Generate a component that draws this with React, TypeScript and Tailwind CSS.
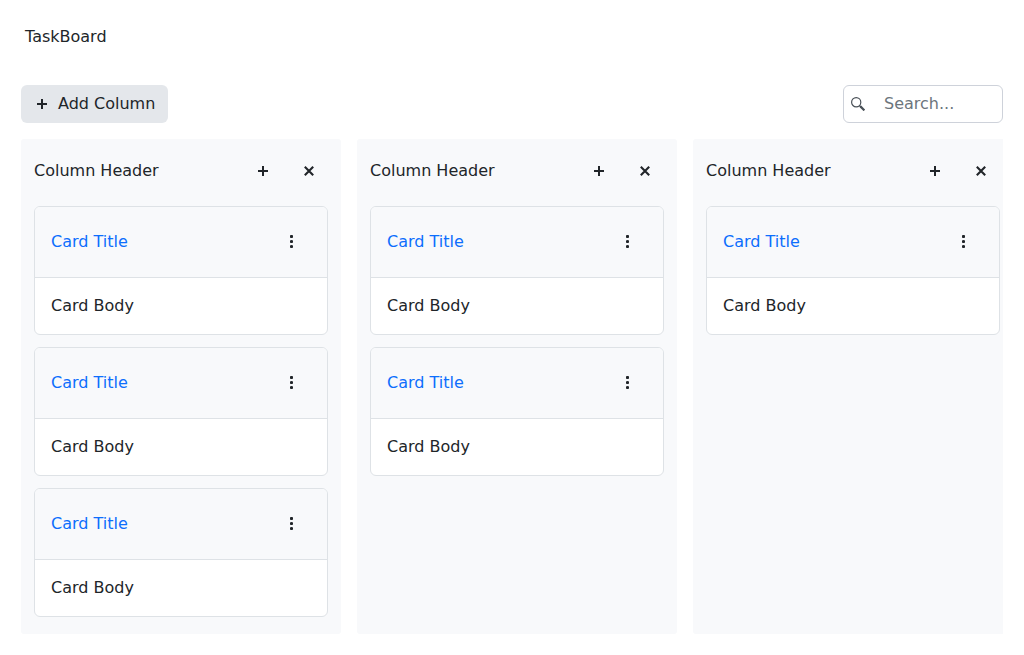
const columns = [3, 2, 1];

function PlusIcon() {
  return (
    <svg width="10" height="10" viewBox="0 0 10 10" className="block shrink-0" fill="currentColor">
      <path d="M4 0h2v4h4v2H6v4H4V6H0V4h4z" />
    </svg>
  );
}

function CloseIcon() {
  return (
    <svg width="10" height="10" viewBox="0 0 10 10" className="block shrink-0" fill="none" stroke="currentColor" strokeWidth="2.1">
      <path d="M0.8 0.8l8.4 8.4M9.2 0.8L0.8 9.2" />
    </svg>
  );
}

function MoreIcon() {
  return (
    <svg width="3" height="13" viewBox="0 0 3 13" className="block shrink-0" fill="currentColor">
      <circle cx="1.5" cy="1.5" r="1.6" />
      <circle cx="1.5" cy="6.5" r="1.6" />
      <circle cx="1.5" cy="11.5" r="1.6" />
    </svg>
  );
}

function SearchIcon() {
  return (
    <svg width="14" height="14" viewBox="0 0 14 14" className="block shrink-0" fill="none" stroke="currentColor">
      <circle cx="5.2" cy="5.2" r="4.6" strokeWidth="1.2" />
      <path d="M8.4 8.4l2 2" strokeWidth="1.4" />
      <path d="M9.4 9.4l4 4" strokeWidth="2.2" />
    </svg>
  );
}

function Card() {
  return (
    <article className="overflow-hidden rounded-md border border-[#dee2e6] bg-white">
      <div className="flex h-[71px] items-center justify-between border-b border-[#dee2e6] bg-[#f8f9fb] pr-[34px] pl-4">
        <a href="#" className="text-[#0d6efd]">Card Title</a>
        <button aria-label="Card options" className="mb-px"><MoreIcon /></button>
      </div>
      <div className="flex h-14 items-center px-4">Card Body</div>
    </article>
  );
}

function Column({ count }: { count: number }) {
  return (
    <section className="w-80 shrink-0 rounded-[3px] bg-[#f8f9fb] px-[13px] pt-3">
      <header className="flex h-[39px] items-center">
        <h2 className="flex-1">Column Header</h2>
        <button aria-label="Add card" className="mr-9"><PlusIcon /></button>
        <button aria-label="Remove column" className="mr-[14px]"><CloseIcon /></button>
      </header>
      <div className="mt-4 flex flex-col gap-3">
        {Array.from({ length: count }, (_, i) => <Card key={i} />)}
      </div>
    </section>
  );
}

export default function App() {
  return (
    <main className="flex h-[655px] flex-col bg-white pt-[25px] pr-[21px] pb-[21px] pl-[21px] font-['DejaVu_Sans',sans-serif] text-base text-[#212529]">
      <h1 className="pl-1">TaskBoard</h1>
      <div className="mt-9 flex items-center justify-between">
        <button className="flex h-[38px] w-[147px] items-center gap-[11px] rounded-md bg-[#e4e7eb] pl-4 whitespace-nowrap">
          <PlusIcon />
          <span>Add Column</span>
        </button>
        <label className="flex h-[38px] w-40 items-center rounded-md border border-[#ced2da] bg-white pl-[7px] text-[#495057]">
          <SearchIcon />
          <input placeholder="Search..." aria-label="Search" className="ml-[19px] w-28 bg-transparent text-[#212529] outline-none placeholder:text-[#6c757d]" />
        </label>
      </div>
      <div className="mt-4 flex min-h-0 flex-1 gap-4 overflow-hidden">
        {columns.map((count, i) => <Column key={i} count={count} />)}
      </div>
    </main>
  );
}
